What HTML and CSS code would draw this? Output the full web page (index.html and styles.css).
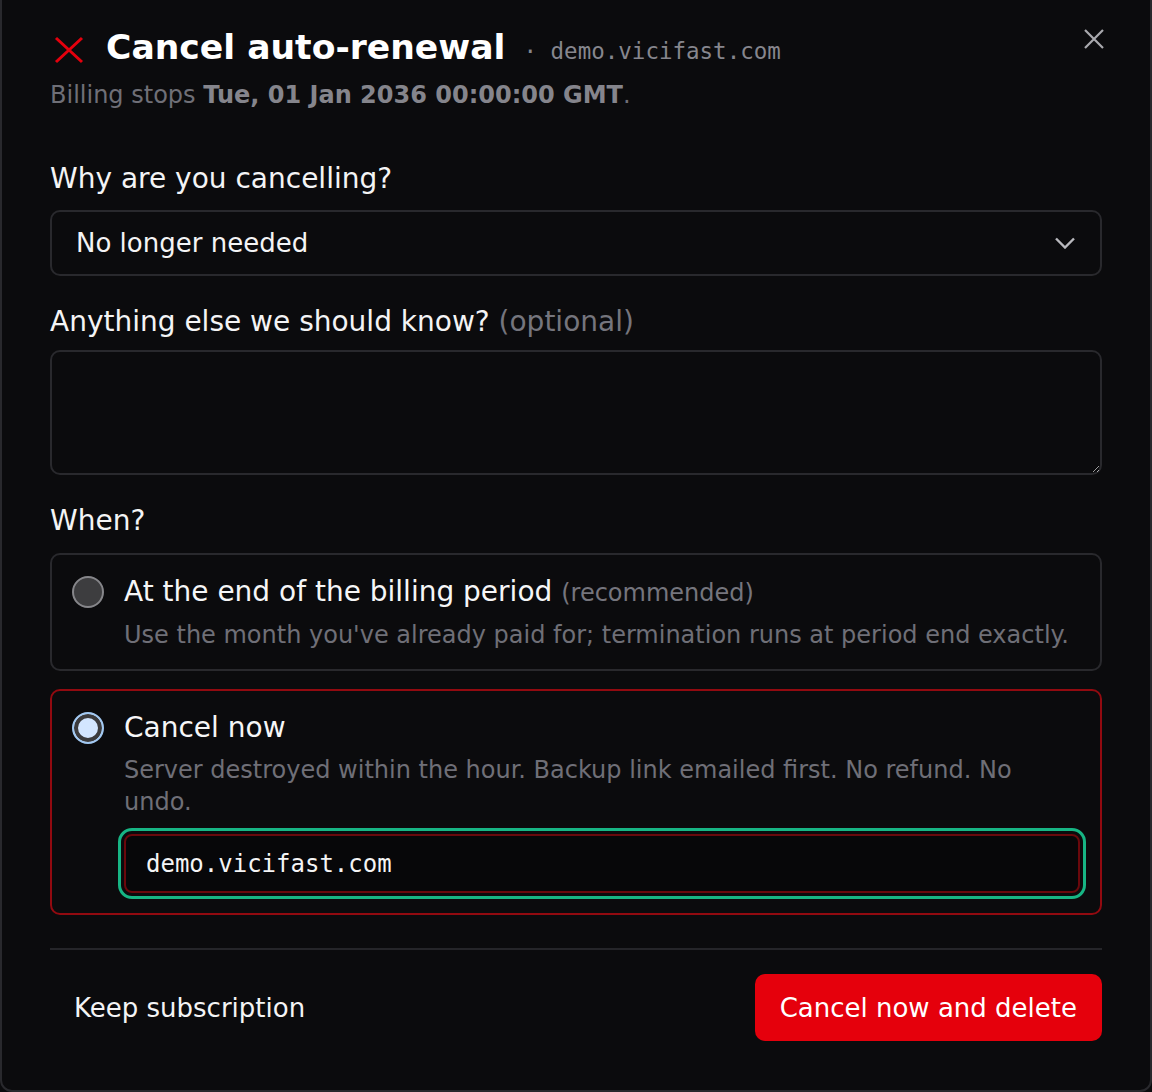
FILE: index.html
```html
<!DOCTYPE html>
<html lang="en">
<head>
    <meta charset="UTF-8">
    <meta name="viewport" content="width=device-width, initial-scale=1.0">
    <title>Cancel auto-renewal</title>
    <link rel="stylesheet" href="styles.css">
</head>
<body>
    <div class="modal">
        <button class="close" aria-label="Close">
            <svg width="20" height="20" viewBox="0 0 20 20"><path d="M1 1 19 19M19 1 1 19" /></svg>
        </button>

        <header class="head">
            <div class="title-row">
                <svg class="icon-x" width="36" height="28" viewBox="0 0 36 28"><path d="M6 2 32 26M32 2 6 26" /></svg>
                <h1>Cancel auto-renewal</h1>
                <span class="host">· demo.vicifast.com</span>
            </div>
            <p class="sub">Billing stops <b>Tue, 01 Jan 2036 00:00:00 GMT</b>.</p>
        </header>

        <form class="form">
            <div class="field">
                <label class="label" for="reason">Why are you cancelling?</label>
                <div class="select-wrap">
                    <select id="reason" class="select">
                        <option>No longer needed</option>
                        <option>Too expensive</option>
                        <option>Moving to another provider</option>
                        <option>Other</option>
                    </select>
                    <svg class="chevron" width="20" height="12" viewBox="0 0 20 12"><path d="M1 1.5 10 10.5 19 1.5" /></svg>
                </div>
            </div>

            <div class="field">
                <label class="label label-notes" for="notes">Anything else we should know? <span class="muted">(optional)</span></label>
                <textarea id="notes" class="textarea"></textarea>
            </div>

            <div class="field">
                <div class="label label-when">When?</div>
                <div class="choices">
                    <label class="choice">
                        <input type="radio" name="when" class="radio">
                        <div class="choice-body">
                            <div class="choice-title">At the end of the billing period <span class="muted small">(recommended)</span></div>
                            <div class="choice-desc">Use the month you've already paid for; termination runs at period end exactly.</div>
                        </div>
                    </label>
                    <div class="choice danger">
                        <input type="radio" name="when" class="radio" checked>
                        <div class="choice-body">
                            <div class="choice-title">Cancel now</div>
                            <div class="choice-desc">Server destroyed within the hour. Backup link emailed first. No refund. No undo.</div>
                            <input type="text" class="confirm" value="demo.vicifast.com" spellcheck="false">
                        </div>
                    </div>
                </div>
            </div>

            <div class="actions">
                <button type="button" class="btn btn-ghost">Keep subscription</button>
                <button type="button" class="btn btn-danger">Cancel now and delete</button>
            </div>
        </form>
    </div>
</body>
</html>
```

FILE: styles.css
```css
body {
    margin: 0;
    background-color: #0b0b0d;
    color: #f4f4f5;
    font-family: "DejaVu Sans", sans-serif;
    color-scheme: dark;
}

.modal {
    position: relative;
    margin-top: -24px;
    padding: 49px 48px;
    background-color: #0b0b0d;
    border: 2px solid #29292d;
    border-radius: 12px;
}

.close {
    position: absolute;
    top: 51px;
    right: 46px;
    padding: 0;
    border: none;
    background: none;
    cursor: pointer;
}

.close svg path {
    stroke: #a9a9ae;
    stroke-width: 2.2;
    fill: none;
}

/* header */

.head {
    margin-bottom: 47px;
}

.title-row {
    display: flex;
    align-items: baseline;
    line-height: 41px;
}

.icon-x {
    align-self: center;
    margin-right: 20px;
}

.icon-x path {
    stroke: #e5000d;
    stroke-width: 3;
    fill: none;
}

.title-row h1 {
    margin: 0 18px 0 0;
    font-size: 34.6px;
    font-weight: bold;
    color: #ffffff;
}

.host {
    font-family: "DejaVu Sans Mono", monospace;
    font-size: 22.5px;
    color: #86868d;
}

.sub {
    margin: 6px 0 0;
    font-size: 24px;
    line-height: 34px;
    color: #6f6f77;
}

.sub b {
    color: #85858c;
}

/* form */

.field {
    margin-bottom: 26px;
}

.label {
    display: block;
    margin-bottom: 11px;
    font-size: 28px;
    line-height: 40px;
    color: #f4f4f5;
}

.label-notes {
    margin-bottom: 8px;
}

.label-when {
    margin-bottom: 12px;
}

.muted {
    color: #75757d;
}

.small {
    font-size: 24px;
}

.select-wrap {
    position: relative;
}

.select {
    display: block;
    width: 100%;
    height: 66px;
    padding: 0 60px 0 24px;
    appearance: none;
    background-color: #0b0b0d;
    border: 2px solid #29292d;
    border-radius: 10px;
    color: #f4f4f5;
    font-family: inherit;
    font-size: 26px;
}

.chevron {
    position: absolute;
    top: 27px;
    right: 27px;
    pointer-events: none;
}

.chevron path {
    stroke: #b9b9be;
    stroke-width: 2.4;
    fill: none;
}

.textarea {
    display: block;
    box-sizing: border-box;
    width: 100%;
    height: 125px;
    padding: 16px 24px;
    background-color: #0b0b0d;
    border: 2px solid #29292d;
    border-radius: 10px;
    color: #f4f4f5;
    font-family: inherit;
    font-size: 26px;
    resize: vertical;
}

.choices {
    display: flex;
    flex-direction: column;
    gap: 18px;
}

.choice {
    display: flex;
    align-items: flex-start;
    gap: 20px;
    padding: 17px 20px 18px;
    border: 2px solid #29292d;
    border-radius: 10px;
    cursor: pointer;
}

.choice.danger {
    padding-bottom: 20px;
    border-color: #920a10;
}

.radio {
    flex: none;
    width: 32px;
    height: 32px;
    margin: 4px 0 0;
    appearance: none;
    background-color: #3d3d3f;
    border: 2px solid #86868a;
    border-radius: 50%;
}

.radio:checked {
    background-color: #d3e6ff;
    border-color: #a2c9f2;
    box-shadow: inset 0 0 0 4px #3b3b3d;
}

.choice-body {
    flex: 1;
}

.choice-title {
    font-size: 28px;
    line-height: 40px;
    color: #f6f6f7;
}

.choice-desc {
    margin-top: 6px;
    font-size: 24px;
    line-height: 32px;
    color: #6f6f77;
}

.confirm {
    display: block;
    box-sizing: border-box;
    width: 100%;
    height: 59px;
    margin-top: 16px;
    padding: 0 20px;
    background-color: #070709;
    border: 2px solid #6a080c;
    border-radius: 8px;
    outline: 3px solid #17b584;
    outline-offset: 3px;
    color: #f4f4f5;
    font-family: "DejaVu Sans Mono", monospace;
    font-size: 24px;
}

/* footer */

.actions {
    display: flex;
    justify-content: space-between;
    margin-top: 33px;
    padding-top: 24px;
    border-top: 2px solid #252529;
}

.btn {
    height: 67px;
    padding: 0 24px;
    border: none;
    border-radius: 10px;
    font-family: inherit;
    font-size: 26px;
    cursor: pointer;
}

.btn-ghost {
    background: none;
    color: #f4f4f5;
}

.btn-danger {
    padding: 0 25px;
    background-color: #e5000c;
    color: #ffffff;
}
```
